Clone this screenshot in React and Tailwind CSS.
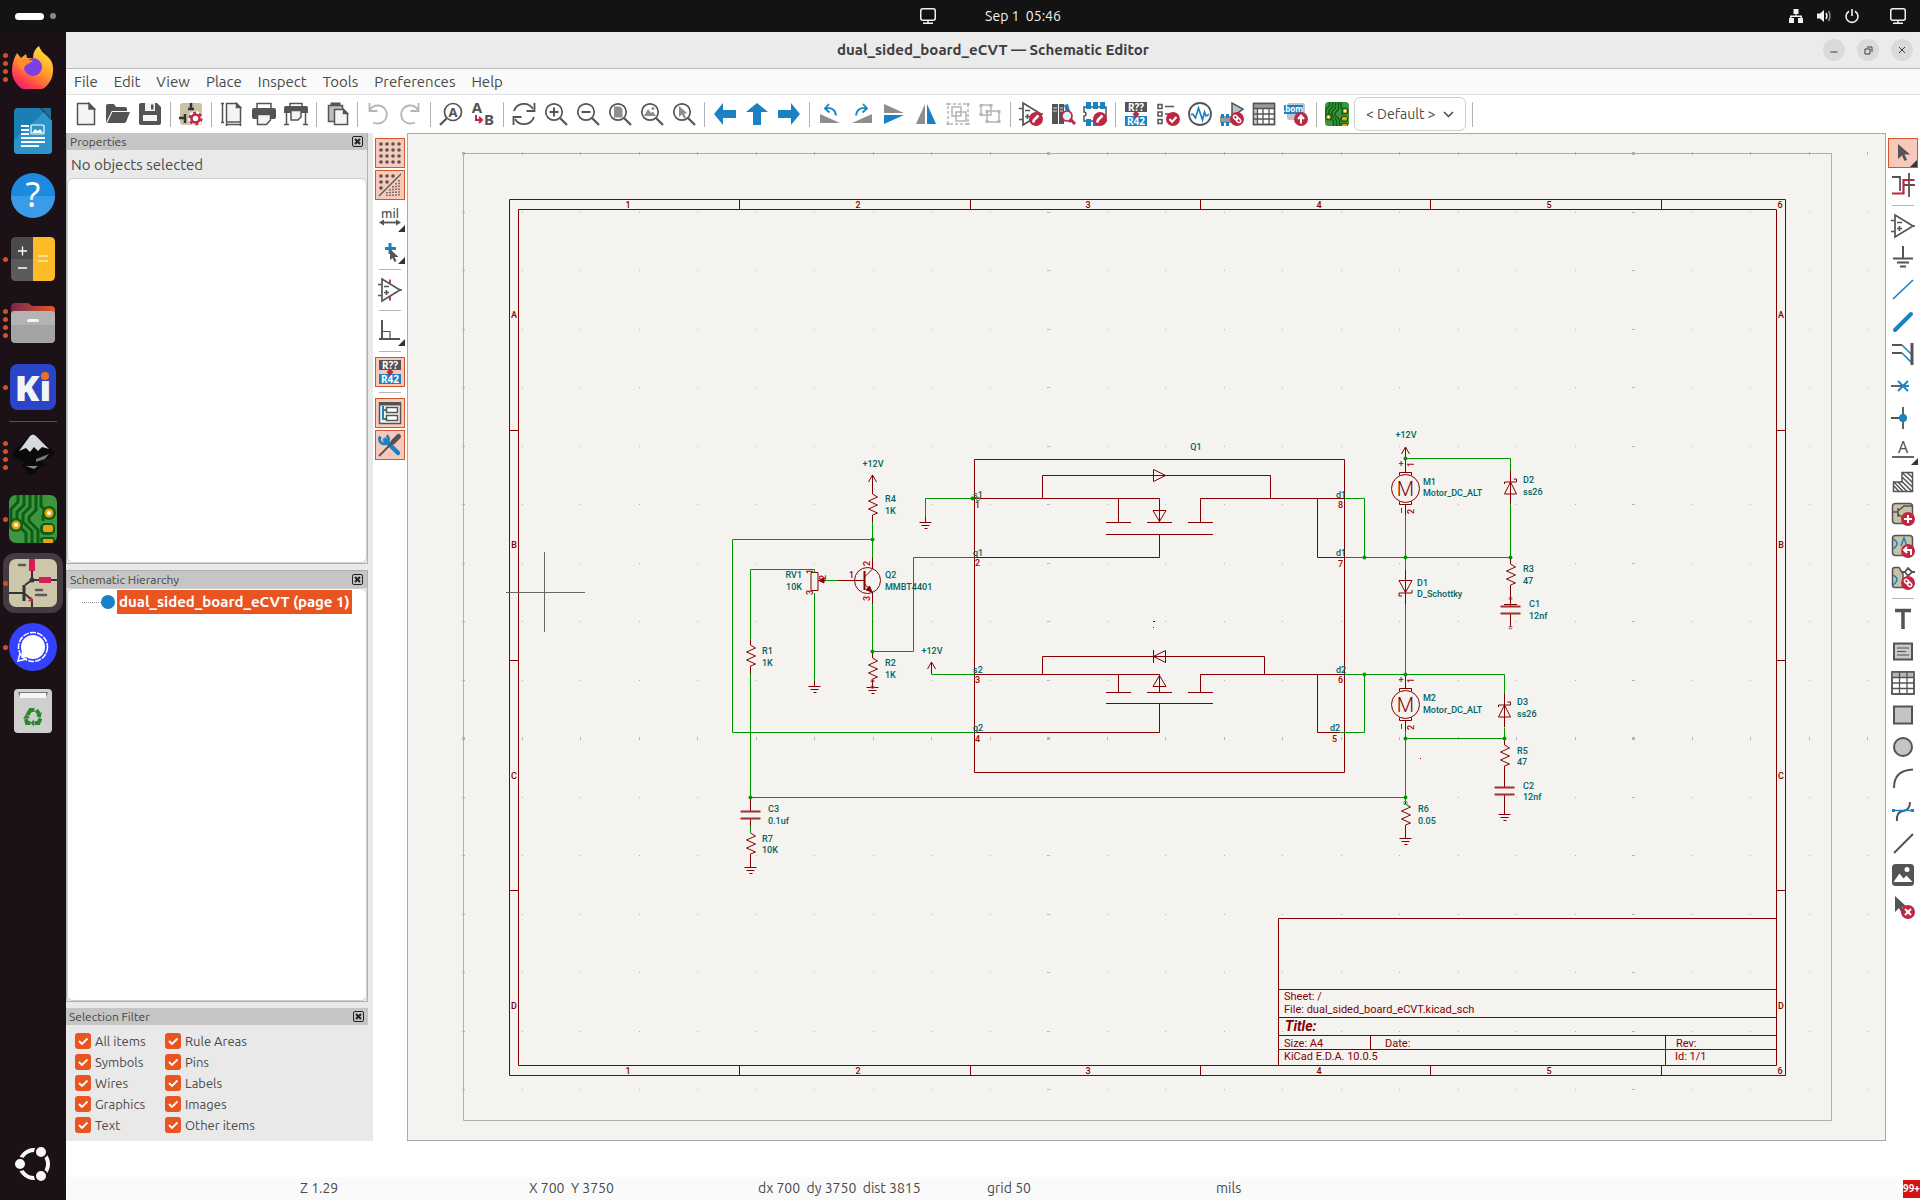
import { useState } from "react";

const INK = "#545454";
const BLUE = "#1a81c4";
const RED = "#bf2641";
const SILVER = "#b5b5b5";

/* ---------- icon helpers ---------- */

const Icon = ({ children, size = 24 }) => (
  <svg
    className="overflow-visible"
    width={size}
    height={size}
    viewBox="0 0 24 24"
    fill="none"
    stroke={INK}
    strokeWidth="1.5"
    aria-hidden="true"
  >
    {children}
  </svg>
);

const IconText = ({ x, y, size, fill = INK, weight = 700, children }) => (
  <text
    x={x}
    y={y}
    fontSize={size}
    fontWeight={weight}
    fill={fill}
    stroke="none"
    textAnchor="middle"
    fontFamily="'Noto Sans', sans-serif"
  >
    {children}
  </text>
);

const Badge = ({ x = 17, y = 17, children }) => (
  <g>
    <circle cx={x} cy={y} r="7" fill={RED} stroke="none" />
    <g stroke="#fff" strokeWidth="2" transform={`translate(${x} ${y})`}>
      {children}
    </g>
  </g>
);

const Pencil = () => <path d="M-3 3.5l1-2.5L2.5-3.5" strokeWidth="2.6" />;
const Link = () => (
  <g strokeWidth="1.5">
    <rect x="-4.5" y="-1.8" width="5" height="3.4" rx="1.7" transform="rotate(45)" />
    <rect x="-0.5" y="-1.8" width="5" height="3.4" rx="1.7" transform="rotate(45)" />
  </g>
);

const Lens = ({ children }) => (
  <Icon>
    <circle cx="10" cy="10" r="8.2" strokeWidth="1.7" />
    <path d="M16 16l7 7" strokeWidth="2.2" />
    {children}
  </Icon>
);

const OpAmp = ({ pins }) => (
  <>
    <path d="M4 1v22L22 12z" strokeWidth="1.7" />
    <path d="M0 6.5h4M0 17.5h4M21 12h3M6 8.5h5M6 14.5h5M8.5 12v5" strokeWidth="1.6" />
    {pins && <path d="M12 1.5v4.5M12 18v4.5" stroke={RED} strokeWidth="1.8" />}
  </>
);

const Annotate = () => (
  <Icon>
    <rect x="1" y="0" width="22" height="10" fill={INK} stroke="none" />
    <rect x="1" y="14" width="22" height="10" fill={BLUE} stroke="none" />
    <IconText x={12} y={9} size={10} fill="#fff">R??</IconText>
    <IconText x={12} y={23} size={10} fill="#fff">R42</IconText>
    <path d="M8.5 12L12 9l3.5 3L12 16z" fill={RED} stroke="none" />
  </Icon>
);

const PcbArt = ({ size }) => (
  <svg width={size} height={size} viewBox="0 0 48 48" aria-hidden="true">
    <rect width="48" height="48" rx="7" fill="#3f9440" />
    <g fill="none" stroke="#0b5f12" strokeWidth="3">
      <path d="M9 0v7L2 14v14M15 0v10L8 17v12l9 9v10M21 0v12l-7 7v8l9 9v12M27 0v15l-7 7v4l9 9v13M38 17L32 11V0M34 26v-5l6-4" />
    </g>
    <g fill="#0b5f12">
      <circle cx="7" cy="30" r="7" />
      <circle cx="40" cy="18" r="7" />
      <rect x="31" y="28" width="15" height="12" rx="5" />
      <rect x="31" y="42" width="15" height="6" rx="3" />
    </g>
    <g fill="#e9a013">
      <circle cx="7" cy="30" r="4.5" />
      <circle cx="40" cy="18" r="4.5" />
      <rect x="34" y="30" width="10" height="7" rx="2" />
      <rect x="34" y="44" width="10" height="4" rx="1" />
    </g>
    <circle cx="7" cy="30" r="2" fill="#fff" />
    <circle cx="40" cy="18" r="2" fill="#fff" />
  </svg>
);

const Search = ({ x, y }) => (
  <g stroke={RED}>
    <circle cx={x} cy={y} r="5" fill="#e9edf6" strokeWidth="1.7" />
    <path d={`M${x + 3.5} ${y + 3.5}l4.5 4.5`} strokeWidth="3" />
  </g>
);

const sheetBase = <rect x="1.5" y="1.5" width="20" height="20" rx="3" fill="#c9c2a6" stroke={INK} />;

const ICONS = {
  new: (
    <Icon>
      <path d="M3.5 1.5H15l5.5 5.5v15.5h-17z" fill="#f4f4f4" />
      <path d="M15 1.5V7h5.5z" fill={INK} />
    </Icon>
  ),
  open: (
    <Icon>
      <path d="M0 21V4q0-2 2-2h6l2 3h9q2 0 2 2v2H6z" fill={INK} stroke="none" />
      <path d="M6 10h18l-4 10q-.5 1-1.5 1H1z" fill={INK} stroke="none" />
      <path d="M1 20L6 9.5h16" stroke="#fff" strokeWidth="1" />
    </Icon>
  ),
  save: (
    <Icon>
      <path d="M1 3q0-2 2-2h16l4 4v16q0 2-2 2H3q-2 0-2-2z" fill={INK} stroke="none" />
      <path d="M7 1h10v8H7zM5 13h14v6H5z" fill="#f4f4f4" stroke="none" />
      <path d="M13 2.5h2.5v5H13z" fill={INK} stroke="none" />
    </Icon>
  ),
  setup: (
    <Icon>
      <rect x="1" y="1" width="22" height="22" rx="3" fill="#c9c2a6" stroke="none" />
      <path d="M12 1v7M0 16h7M6 12v9M9 7h6" stroke="#333" strokeWidth="2.5" />
      <circle cx="16.5" cy="16.5" r="7.5" fill="#fff" stroke="none" />
      <circle cx="16.5" cy="16.5" r="4" stroke={RED} strokeWidth="2.5" />
      <circle cx="16.5" cy="16.5" r="6" stroke={RED} strokeWidth="2.2" strokeDasharray="3 3.28" />
    </Icon>
  ),
  page: (
    <Icon>
      <path d="M6.5 1.5h10l4 4v14.5h-14z" fill="#f4f4f4" />
      <path d="M16.5 1.5v4h4z" fill={INK} />
      <path d="M2.5 1v20M1 1.5h3M1 20.5h3M6 22.5h15M6.5 21v3M20.5 21v3" />
    </Icon>
  ),
  print: (
    <Icon>
      <path d="M5 7V1.5h14V7" />
      <path d="M0 8q0-2 2-2h20q2 0 2 2v7q0 2-2 2H2q-2 0-2-2z" fill={INK} stroke="none" />
      <path d="M5.5 12.5h13V18l-4 4.5h-9z" fill="#f4f4f4" />
    </Icon>
  ),
  plot: (
    <Icon>
      <path d="M6 4V1.5h12V4" />
      <path d="M0 6q0-2 2-2h20q2 0 2 2v5H0z" fill={INK} stroke="none" />
      <path d="M7 8.5h10V15l-3 3H7z" fill="#f4f4f4" />
      <path d="M2.5 10v13M21.5 10v13M0 22.5h5M19 22.5h5" />
    </Icon>
  ),
  paste: (
    <Icon>
      <path d="M3.5 3.5h14v16h-14z" fill="#bdbdbd" />
      <path d="M7 3.5V2h7v1.5" strokeWidth="3" />
      <path d="M9.5 7.5h9l4 4v11h-13z" fill="#f4f4f4" />
      <path d="M18.5 7.5v4h4z" fill={INK} />
    </Icon>
  ),
  undo: (
    <Icon>
      <path d="M4 8a9 9 0 118 13.5q-3 0-5-1M3.5 1v8h8" stroke={SILVER} strokeWidth="1.8" />
    </Icon>
  ),
  redo: (
    <Icon>
      <path d="M20 8a9 9 0 10-8 13.5q3 0 5-1M20.5 1v8h-8" stroke={SILVER} strokeWidth="1.8" />
    </Icon>
  ),
  find: (
    <Icon>
      <circle cx="14" cy="10" r="8.5" strokeWidth="1.7" />
      <path d="M8 16l-7 7" strokeWidth="2.2" />
      <IconText x={14} y={15} size={13}>A</IconText>
    </Icon>
  ),
  replace: (
    <Icon>
      <IconText x={6} y={11} size={15}>A</IconText>
      <IconText x={18} y={23} size={15}>B</IconText>
      <path d="M5 13v5h5M8 15l3 3-3 3" stroke={RED} strokeWidth="2" />
    </Icon>
  ),
  refresh: (
    <Icon>
      <path d="M2 9A10.5 10.5 0 0121 7M22 15a10.5 10.5 0 01-19 2" strokeWidth="1.8" />
      <path d="M22.5 1v8h-8M1.5 23v-8h8" strokeWidth="1.8" />
    </Icon>
  ),
  zoomIn: <Lens><path d="M5.5 10h9M10 5.5v9" strokeWidth="2" /></Lens>,
  zoomOut: <Lens><path d="M5.5 10h9" strokeWidth="2" /></Lens>,
  zoomPage: <Lens><path d="M6 4.5h6l2.5 2.5v8.5H6z" fill="#8e8e8e" stroke="none" /></Lens>,
  zoomObjects: (
    <Lens>
      <path d="M4 14l4-7 3 4 2-1.5 3 4.5z" fill="#8e8e8e" stroke="none" />
      <circle cx="13" cy="6.5" r="1.5" fill="#8e8e8e" stroke="none" />
    </Lens>
  ),
  zoomSelection: <Lens><path d="M7 4v11l3-2.5 2 4 2-1-2-4h3.5z" fill="#8e8e8e" stroke="none" /></Lens>,
  back: <Icon><path d="M1 12l9-11v7h13v8H10v7z" fill={BLUE} stroke="none" /></Icon>,
  up: <Icon><path d="M12 1l11 9h-7v13H8V10H1z" fill={BLUE} stroke="none" /></Icon>,
  forward: <Icon><path d="M23 12L14 1v7H1v8h13v7z" fill={BLUE} stroke="none" /></Icon>,
  rotateLeft: (
    <Icon>
      <path d="M2 12v9h20z" fill="#8e8e8e" stroke="none" />
      <path d="M7 6.5q10-2 11 7M11 2L7 6.5l4.5 4" stroke={BLUE} strokeWidth="1.8" />
    </Icon>
  ),
  rotateRight: (
    <Icon>
      <path d="M22 12v9H2z" fill="#8e8e8e" stroke="none" />
      <path d="M17 6.5q-10-2-11 7M13 2l4 4.5-4.5 4" stroke={BLUE} strokeWidth="1.8" />
    </Icon>
  ),
  mirrorV: (
    <Icon>
      <path d="M2 2v9h20z" fill="#8e8e8e" stroke="none" />
      <path d="M2 22v-9h20z" fill={BLUE} stroke="none" />
    </Icon>
  ),
  mirrorH: (
    <Icon>
      <path d="M2 22h9V2z" fill="#8e8e8e" stroke="none" />
      <path d="M22 22h-9V2z" fill={BLUE} stroke="none" />
    </Icon>
  ),
  group: (
    <Icon>
      <g stroke={SILVER}>
        <path d="M2 2h20v20H2z" strokeDasharray="3 2" />
        <path d="M6 5h9v9H6zM10 10h10v9H10z" fill="#fff" />
        <path d="M2 1v2M22 1v2M2 21v2M22 21v2" strokeWidth="3" />
      </g>
    </Icon>
  ),
  ungroup: (
    <Icon>
      <g stroke={SILVER}>
        <path d="M3 3h10v10H3zM9 9h12v11H9z" fill="#fff" />
        <path d="M3 2v3M13 2v3M3 11v3M9 8v3M21 8v3M9 18v3M21 18v3" strokeWidth="3" />
      </g>
    </Icon>
  ),
  symbolEditor: <Icon><OpAmp /><Badge><Pencil /></Badge></Icon>,
  libraries: (
    <Icon>
      <path d="M1 2h6v20H1zM8 2h5v20H8z" fill={INK} stroke="none" />
      <path d="M2 6h4M2 9h4M9 6h3M9 9h3" stroke="#ddd" strokeWidth="1" />
      <path d="M13 3l4-1 5 17-4 2z" fill={BLUE} stroke="none" />
      <Search x={16} y={14} />
    </Icon>
  ),
  footprintEditor: (
    <Icon>
      <path d="M1 5h22v14H1v-5a2 2 0 000-4z" fill="#fff" />
      <path d="M3 0h5v7H3zM10 0h5v7h-5zM17 0h5v7h-5zM3 17h5v7H3zM10 17h5v7h-5z" fill={BLUE} stroke="none" />
      <Badge><Pencil /></Badge>
    </Icon>
  ),
  annotate: <Annotate />,
  erc: (
    <Icon>
      <path d="M2 2.5h4v4H2zM2 10h4v4H2zM2 17.5h4v4H2zM9 4.5h9M9 12h5" />
      <Badge><path d="M-3.5 0l2.5 3 4.5-5" /></Badge>
    </Icon>
  ),
  simulator: (
    <Icon>
      <circle cx="12" cy="12" r="11" fill="#fff" strokeWidth="1.8" />
      <path d="M3 13q1.5-2 2.5 0t2 3L10.5 6l4 12 2-8 1.5 4q1 0 3-2" stroke={BLUE} strokeWidth="1.7" />
    </Icon>
  ),
  assign: (
    <Icon>
      <path d="M12 1v14l11-8z" fill="#b5c3cc" stroke={INK} />
      <path d="M0 14h11v7H0z" fill="#999" stroke="none" />
      <path d="M1 12h3v4H1zM6 12h3v4H6zM1 20h3v4H1zM6 20h3v4H6z" fill={BLUE} stroke="none" />
      <Badge><Link /></Badge>
    </Icon>
  ),
  fields: (
    <Icon>
      <path d="M1.5 1.5h21v21h-21z" fill="#fff" />
      <path d="M1 1h22v5H1z" fill="#999" stroke="none" />
      <path d="M1 6h4v17H1z" fill="#ccc" stroke="none" />
      <path d="M1.5 1.5h21v21h-21zM1 6.5h22M1 12h22M1 17h22M5.5 6v16M11 6v16M17 6v16" strokeWidth="1.3" />
    </Icon>
  ),
  bom: (
    <Icon>
      <rect x="3" y="1" width="18" height="17" rx="2" fill="#c4c4c4" stroke="none" />
      <rect x="0" y="3" width="19" height="9" fill={BLUE} stroke="none" />
      <IconText x={9} y={10} size={8} fill="#fff">.bom</IconText>
      <Badge><path d="M0 4.5v-8M-3 0l3-3.5L3 0" /></Badge>
    </Icon>
  ),
  pcb: <PcbArt size={24} />,
  grid: (
    <Icon>
      {[3, 9, 15, 21].map((y) => (
        <path key={y} d={`M3 ${y}h.01M9 ${y}h.01M15 ${y}h.01M21 ${y}h.01`} strokeWidth="3.6" strokeLinecap="round" />
      ))}
    </Icon>
  ),
  gridOverride: (
    <Icon>
      <path d="M3 3h.01M9 3h.01M15 3h.01M3 9h.01M9 9h.01M3 15h.01" strokeWidth="3.6" strokeLinecap="round" />
      <path d="M1 23L23 1" strokeWidth="1.2" />
      <g strokeDasharray="1.5 1.3" strokeWidth="1.5">
        <path d="M21 7v16M18 10v13M15 13v10M12 16v7M9 19v4" />
      </g>
    </Icon>
  ),
  mil: (
    <Icon>
      <IconText x={12} y={13} size={12} weight={500}>mil</IconText>
      <path d="M3 17.5h18" strokeWidth="1.8" />
      <path d="M1 17.5l5-3v6zM23 17.5l-5-3v6z" fill={INK} stroke="none" />
    </Icon>
  ),
  cursor: (
    <Icon>
      <path d="M12 6v11M7 11.5h11" stroke={BLUE} strokeWidth="3" />
      <path d="M12 12v11l2.5-2 2 4 2-1-2-4h4z" fill={INK} stroke="none" />
    </Icon>
  ),
  hiddenPins: <Icon><OpAmp pins /></Icon>,
  angle: <Icon><path d="M4 1v20M1 20h21" strokeWidth="2" /><path d="M4 12.5h8V20" strokeWidth="1.2" /></Icon>,
  hierarchy: (
    <Icon>
      <path d="M1.5 2h21v20.5h-21z" fill="#f4f4f4" />
      <path d="M1 1h22v3.5H1z" fill={INK} stroke="none" />
      <path d="M5 5v13h3M5 9h3" stroke={BLUE} strokeWidth="2" />
      <path d="M8.5 6.5h11v5h-11zM8.5 14.5h11v5h-11z" fill="#fff" />
    </Icon>
  ),
  tools: (
    <Icon>
      <path d="M7 7l13 13" stroke={BLUE} strokeWidth="4.5" strokeLinecap="round" />
      <path d="M2.5 3.5a4.5 4.5 0 106-1" stroke={BLUE} strokeWidth="3" />
      <path d="M1 23L14 10" strokeWidth="1.8" />
      <path d="M15 9l5.5-5.5" strokeWidth="5" strokeLinecap="round" />
    </Icon>
  ),
  select: <Icon><path d="M7 3v15l4-3.5 2.5 5.5 2.5-1.2-2.5-5.3H19z" fill={INK} stroke="none" /></Icon>,
  highlightNet: (
    <Icon>
      <path d="M1 4h8v14M18 0v24M13 12h11" strokeWidth="1.8" />
      <path d="M1 20.5h11.5V7h11" stroke={RED} strokeWidth="2.2" />
    </Icon>
  ),
  symbol: <Icon><OpAmp /></Icon>,
  power: <Icon><path d="M12 0v12M2 12.5h20M6 16.5h12M9 20.5h6" strokeWidth="2" /></Icon>,
  wire: <Icon><path d="M2 21L22 2" stroke={BLUE} strokeWidth="1.6" /></Icon>,
  bus: <Icon><path d="M4 20L20 4" stroke={BLUE} strokeWidth="4" strokeLinecap="round" /></Icon>,
  busEntry: (
    <Icon>
      <path d="M1 3h10M1 11h10" strokeWidth="1.8" />
      <path d="M11 3l10 10M11 11l10 10" stroke={BLUE} strokeWidth="1.6" />
      <path d="M21 1v22" strokeWidth="3" />
    </Icon>
  ),
  noConnect: <Icon><path d="M0 12h12" strokeWidth="1.8" /><path d="M7 7l10 10M17 7L7 17M12 12h6" stroke={BLUE} strokeWidth="1.8" /></Icon>,
  junction: <Icon><path d="M12 1v22M0 12h12" strokeWidth="1.8" /><circle cx="12" cy="12" r="4" fill={BLUE} stroke="none" /></Icon>,
  label: <Icon><IconText x={12} y={15} size={16} weight={400}>A</IconText><path d="M1 19h22" strokeWidth="1.8" /></Icon>,
  ruleArea: (
    <Icon>
      <path d="M11 2.5h10.5v19h-19V12H11z" fill="#fff" />
      <path d="M11 2.5l10.5 10M11 7l10.5 10M3 12l9 9.5M11 11.5l10 10M16 2.5l5.5 5M3 16l5 5.5M7 12l9 9.5" strokeWidth="1.5" />
    </Icon>
  ),
  sheet: (
    <Icon>
      {sheetBase}
      <path d="M2 10h5M7 6v9M7 9l6-5h8M7 12l5 4" strokeWidth="1.5" />
      <Badge><path d="M-4 0h8M0-4v8" /></Badge>
    </Icon>
  ),
  importSheet: (
    <Icon>
      {sheetBase}
      <path d="M2 5q8 4 0 10M10 12l3-8 3 8" stroke={BLUE} />
      <Badge><path d="M3 4V-1h-6M-1-4l-3 3 3 3" /></Badge>
    </Icon>
  ),
  syncSheet: (
    <Icon>
      <path d="M8 1.5H4q-2.500 0-2.500 2.500v15q0 2.500 2.500 2.500h8V8z" fill="#c9c2a6" />
      <path d="M2 9q8 4 0 10" stroke={BLUE} />
      <path d="M11 6h3l3-4 4 4h3M14 6l3 4 4-4" strokeWidth="1.8" />
      <Badge><Link /></Badge>
    </Icon>
  ),
  text: <Icon><path d="M4 3.5h16M12 3v19" strokeWidth="3.5" /></Icon>,
  textBox: <Icon><path d="M3 4.5h18v16H3z" fill="#c9c9c9" strokeWidth="2" /><path d="M6 9h12M6 12.5h9M6 16h12" strokeWidth="1.2" /></Icon>,
  table: (
    <Icon>
      <path d="M1 1h22v22H1z" fill="#fff" />
      <path d="M1 1h22v5H1z" fill="#b5b5b5" stroke="none" />
      <path d="M1 1h22v22H1zM1 6.5h22M1 12h22M1 17.5h22M8.5 1v22M16 1v22" strokeWidth="1.3" />
    </Icon>
  ),
  rect: <Icon><path d="M3 3.5h18v17H3z" fill="#c4c4c4" strokeWidth="2" /></Icon>,
  circle: <Icon><circle cx="12" cy="12" r="9" fill="#c4c4c4" strokeWidth="2" /></Icon>,
  arc: <Icon><path d="M3 21Q3 3 22 2.5" strokeWidth="2" /></Icon>,
  bezier: (
    <Icon>
      <path d="M6 22q-1-9 6-10t7-9" strokeWidth="2" />
      <path d="M2 11.5h20" stroke={BLUE} strokeWidth="1.5" />
      <path d="M1 10h3v3H1zM20 10h3v3h-3z" fill={BLUE} stroke="none" />
    </Icon>
  ),
  line: <Icon><path d="M3 22L22 3" strokeWidth="2" /></Icon>,
  image: (
    <Icon>
      <rect x="1" y="1" width="22" height="22" rx="3.5" fill={INK} stroke="none" />
      <path d="M2.5 19l6-8.5 4 5 3-3 6 6.5z" fill="#fff" stroke="none" />
      <circle cx="16" cy="6.5" r="2.5" fill="#fff" stroke="none" />
    </Icon>
  ),
  remove: (
    <Icon>
      <path d="M4 1v16l4-4 3 6 3-1.5-3-5.5h5z" fill={INK} stroke="none" />
      <Badge><path d="M-3-3l6 6M3-3l-6 6" /></Badge>
    </Icon>
  ),
};

/* "|" is a separator, "*" marks a pressed button, "+" one with a flyout */
const TOP_TOOLS =
  "new open save | setup | page print plot | paste | undo redo | find replace | refresh zoomIn zoomOut zoomPage zoomObjects zoomSelection | back up forward | rotateLeft rotateRight mirrorV mirrorH group ungroup | symbolEditor libraries footprintEditor | annotate erc simulator assign fields bom | pcb";
const LEFT_TOOLS = "grid* gridOverride* mil+ cursor+ | hiddenPins | angle+ | annotate* | hierarchy* tools*";
const RIGHT_TOOLS =
  "select*+ highlightNet | symbol power wire bus busEntry noConnect junction label+ ruleArea sheet importSheet syncSheet | text textBox table rect circle arc bezier line image remove";

const Tools = ({ list, vertical }) =>
  list.split(" ").map((entry, i) => {
    if (entry === "|") {
      return vertical ? (
        <div key={i} className="flex h-[9px] w-full items-center justify-center">
          <div className="h-px w-[22px] bg-[#b4b4b4]" />
        </div>
      ) : (
        <div key={i} className="flex h-[25px] w-[9px] justify-center">
          <div className="w-px bg-[#b4b4b4]" />
        </div>
      );
    }
    const name = entry.replace(/[*+]/g, "");
    return (
      <button
        key={i}
        aria-label={name}
        className={`relative m-px flex h-[30px] w-[30px] shrink-0 items-center justify-center ${
          entry.includes("*") ? "border border-[#d0582f] bg-[#f6c9bb]" : ""
        }`}
      >
        {ICONS[name]}
        {entry.includes("+") && (
          <svg className="absolute right-0 bottom-0" width="7" height="7" viewBox="0 0 7 7">
            <path d="M7 0v7H0z" fill="#333" />
          </svg>
        )}
      </button>
    );
  });

/* ---------- shell top bar and dock ---------- */

const Screen = () => (
  <svg width="18" height="18" viewBox="0 0 18 18" fill="none" stroke="#f2f2f2" strokeWidth="1.5">
    <rect x="1.75" y="1.75" width="14.5" height="11.5" rx="2" />
    <path d="M9 13v2.500M4 16.250h10" />
  </svg>
);

const TopBar = () => (
  <header className="grid h-8 shrink-0 grid-cols-3 items-center bg-[#131313] text-[#f2f2f2]">
    <div className="flex items-center gap-[6px] pl-[15px]">
      <span className="h-[7px] w-[29px] rounded-full bg-white" />
      <span className="h-[6px] w-[6px] rounded-full bg-[#8a8a8a]" />
    </div>
    <div className="flex items-center justify-center gap-12 pl-[60px]">
      <Screen />
      <time className="text-[14px] leading-[18px]">Sep 1&nbsp; 05:46</time>
    </div>
    <div className="flex items-center justify-end gap-3 pr-[13px]">
      <svg width="16" height="16" viewBox="0 0 16 16" fill="#f2f2f2">
        <path d="M5.5 1h5v5h-2v1.5H14V10h1v5h-5v-5h2.5V9h-9v1H6v5H1v-5h1V7.5h5.5V6h-2z" />
      </svg>
      <svg width="16" height="16" viewBox="0 0 16 16" fill="#f2f2f2">
        <path d="M1 5.5h3L8 2v12l-4-3.5H1z" />
        <path d="M10 5q2 3 0 6" fill="none" stroke="#f2f2f2" strokeWidth="1.5" />
        <path d="M12.5 3q3 5 0 10" fill="none" stroke="#8a8a8a" strokeWidth="1.5" />
      </svg>
      <svg width="16" height="16" viewBox="0 0 16 16" fill="none" stroke="#f2f2f2" strokeWidth="1.6">
        <path d="M8 1v7M5 3.2a6 6 0 106 0" />
      </svg>
      <span className="pl-[17px]">
        <Screen />
      </span>
    </div>
  </header>
);

const DOCK = [
  {
    name: "Firefox",
    dots: 4,
    art: (
      <svg width="44" height="44" viewBox="0 0 44 44">
        <defs>
          <linearGradient id="fox" x1="0.8" y1="0" x2="0.2" y2="1">
            <stop offset="0" stopColor="#ffe93b" />
            <stop offset="0.45" stopColor="#ff9a2b" />
            <stop offset="0.8" stopColor="#ff3b4f" />
            <stop offset="1" stopColor="#e6188c" />
          </linearGradient>
        </defs>
        <path d="M6 8l4 5 5-4 1 4h6q0-8 6-12 2 6 8 10 7 6 6 15a20 20 0 01-41 0Q1 16 6 8z" fill="url(#fox)" />
        <circle cx="22" cy="22" r="9" fill="#7b3fe4" />
        <path d="M6 16q8-4 16 0l-5 3q-5 2-4 7-6-3-7-10z" fill="#ff8a2b" />
      </svg>
    ),
  },
  {
    name: "LibreOffice Writer",
    dots: 0,
    art: (
      <svg width="38" height="46" viewBox="0 0 38 46">
        <path d="M0 4q0-4 4-4h22l12 13v29q0 4-4 4H4q-4 0-4-4z" fill="#1b7fb5" />
        <path d="M0 32L30 4l8 9v29q0 4-4 4H4q-4 0-4-4z" fill="#2a94cb" />
        <path d="M27 0h10v11z" fill="#1f6f9c" />
        <path d="M7 18h8M7 22h8M7 26h8M7 30h24M7 34h24M7 38h18" stroke="#fff" strokeWidth="2" />
        <rect x="17" y="17" width="13" height="9" rx="1" fill="none" stroke="#fff" strokeWidth="1.2" />
        <path d="M18 25l3-4 3 2 2-2 3 4z" fill="#fff" />
      </svg>
    ),
  },
  {
    name: "Help",
    dots: 0,
    art: (
      <svg className="overflow-visible" width="44" height="44" viewBox="0 0 44 44">
        <circle cx="22" cy="22" r="22" fill="#1e8adf" />
        <path d="M0 23h44a22 22 0 01-44 0z" fill="#3a9ce8" />
        <text x="22" y="34" fontSize="34" fill="#fff" textAnchor="middle" fontFamily="'Noto Sans', sans-serif">?</text>
      </svg>
    ),
  },
  {
    name: "Calculator",
    dots: 1,
    art: (
      <svg width="44" height="44" viewBox="0 0 44 44">
        <path d="M5 0h17v44H5q-5 0-5-5V5q0-5 5-5z" fill="#4a4a4a" />
        <path d="M0 22h22v22H5q-5 0-5-5z" fill="#5b5b5b" />
        <path d="M22 0h17q5 0 5 5v34q0 5-5 5H22z" fill="#fdbb27" />
        <path d="M7 14h9M11.5 9.5v9M7 31h9" stroke="#fff" strokeWidth="1.3" />
        <path d="M27 19h10M27 24h10" stroke="#fff" strokeWidth="1.2" />
      </svg>
    ),
  },
  {
    name: "Files",
    dots: 4,
    art: (
      <svg width="44" height="40" viewBox="0 0 44 40">
        <defs>
          <linearGradient id="folder">
            <stop offset="0" stopColor="#77264a" />
            <stop offset="1" stopColor="#e6582b" />
          </linearGradient>
        </defs>
        <path d="M0 4q0-4 4-4h13l4 3h19q4 0 4 4v20H0z" fill="url(#folder)" />
        <rect y="8" width="44" height="32" rx="4" fill="#a3a3a3" />
        <path d="M0 12q0-4 4-4h36q4 0 4 4v10H0z" fill="#b3b3b3" />
        <rect x="16" y="16" width="12" height="3" rx="1.5" fill="#f4f4f4" />
      </svg>
    ),
  },
  {
    name: "KiCad",
    dots: 1,
    art: (
      <svg className="overflow-visible" width="46" height="46" viewBox="0 0 46 46">
        <rect width="46" height="46" rx="8" fill="#2a45c8" />
        <text x="23" y="37" fontSize="36" fontWeight="800" fill="#f4f4f4" textAnchor="middle" fontFamily="'Open Sans', sans-serif">Ki</text>
        <rect x="31" y="6" width="10" height="11" fill="#2a45c8" />
        <circle cx="35" cy="12" r="4" fill="#f5701d" />
      </svg>
    ),
  },
  null,
  {
    name: "Inkscape",
    dots: 4,
    art: (
      <svg width="46" height="46" viewBox="0 0 46 46">
        <path d="M20 3q3-3 6 0l17 16q3 3-1 5-6 4-11 5l4 4q-5 3-8 5-2 6-7 5-4-1-3-5-7-2-5-5l4-3q-8-1-13-6-2-2 0-4z" fill="#0a0a0a" />
        <path d="M20 4q3-3 6 0l13 13-7-2-4 4-4-4-4 5-4-4-7 3z" fill="#d5d8dc" />
        <path d="M26 27l13-5-4 5-9 3z" fill="#777" />
        <path d="M16 34h12l-4 3z" fill="#888" />
      </svg>
    ),
  },
  { name: "PCB Editor", dots: 1, art: <PcbArt size={48} /> },
  {
    name: "Schematic Editor",
    dots: 1,
    active: true,
    art: (
      <svg width="48" height="48" viewBox="0 0 48 48">
        <rect width="48" height="48" rx="7" fill="#cdc6a9" />
        <g stroke="#333" strokeWidth="2" fill="none">
          <path d="M23 0v21l-7 5M0 34h15M23 21h25M16 35l7 6v7" />
          <path d="M15 26v16" strokeWidth="3" />
          <path d="M10 6h6M27 31h6M27 36h10" strokeWidth="2.5" strokeLinecap="round" stroke="#5a5a5a" />
        </g>
        <circle cx="23" cy="21" r="2.5" fill="#333" />
        <path d="M20 0h6v12h-6zM30 18h12v6H30zM24 43l-5-1 4-4z" fill="#d81b5c" />
      </svg>
    ),
  },
  {
    name: "Signal",
    dots: 1,
    art: (
      <svg width="48" height="48" viewBox="0 0 48 48">
        <circle cx="24" cy="24" r="24" fill="#3442ff" />
        <circle cx="24" cy="24" r="14.5" fill="none" stroke="#fff" strokeWidth="1.5" strokeDasharray="6 1.2" />
        <path d="M11 30l-2 8 9-2" fill="none" stroke="#fff" strokeWidth="1.5" />
        <circle cx="24" cy="24" r="12" fill="#fff" />
        <path d="M13 27l-1 8 8-1z" fill="#fff" />
      </svg>
    ),
  },
  {
    name: "Trash",
    dots: 0,
    art: (
      <svg width="38" height="44" viewBox="0 0 38 44">
        <rect width="38" height="44" rx="4" fill="#cfcfcf" />
        <path d="M4 3h30l-2 5H6z" fill="#777" />
        <path d="M6 4h26v5H6z" fill="#f6f6f6" />
        <g fill="none" stroke="#2a8a2a" strokeWidth="4">
          <path d="M13.5 26l3-5h4M22.5 21l3 5M26.5 29.5l-2 4.5h-4M16.5 34H13l-1-4" />
        </g>
        <path d="M28 23l-1.5 6-4.5-2zM20 30.5v7l-3.5-3.5zM9 30l3-5 4 4z" fill="#2a8a2a" />
      </svg>
    ),
  },
];

const Dock = () => (
  <nav className="flex w-[66px] shrink-0 flex-col bg-[#1d1118] pt-[3px]">
    {DOCK.map((app, i) =>
      app === null ? (
        <div key={i} className="flex h-1 items-center justify-center">
          <div className="h-px w-12 bg-[#5a5056]" />
        </div>
      ) : (
        <div key={app.name} className="relative flex h-16 items-center justify-center">
          <div className="absolute left-[3px] flex flex-col gap-[3px]">
            {Array.from({ length: app.dots }, (_, n) => (
              <span key={n} className="h-[5px] w-[5px] rounded-full bg-[#d4501f]" />
            ))}
          </div>
          <button
            aria-label={app.name}
            className={`flex h-[60px] w-[60px] items-center justify-center rounded-xl ${app.active ? "bg-[#453a41]" : ""}`}
          >
            {app.art}
          </button>
        </div>
      ),
    )}
    <button aria-label="Show apps" className="mt-auto mb-1 flex h-16 items-center justify-center">
      <svg width="38" height="38" viewBox="0 0 38 38" fill="none" stroke="#f7f7f7" strokeWidth="4">
        <circle cx="20" cy="19" r="14" />
        <g fill="#f7f7f7" stroke="#1d1118" strokeWidth="2">
          <circle cx="6" cy="19" r="6" />
          <circle cx="27" cy="7" r="6" />
          <circle cx="27" cy="31" r="6" />
        </g>
      </svg>
    </button>
  </nav>
);

/* ---------- left panels ---------- */

const PanelHeader = ({ title }) => (
  <div className="flex h-[17px] shrink-0 items-center justify-between bg-[#c5c5c5] pr-1 pl-[3px]">
    <h2 className="text-[12px] leading-[14px] text-[#444]">{title}</h2>
    <button aria-label={`Close ${title}`}>
      <svg width="11" height="11" viewBox="0 0 11 11" fill="none" stroke="#222">
        <rect x="0.5" y="0.5" width="10" height="10" rx="1.5" />
        <path d="M3 3l5 5M8 3L3 8" strokeWidth="2" />
      </svg>
    </button>
  </div>
);

const FILTERS = [
  "All items", "Rule Areas",
  "Symbols", "Pins",
  "Wires", "Labels",
  "Graphics", "Images",
  "Text", "Other items",
];

const SelectionFilter = () => {
  const [off, setOff] = useState({});
  return (
    <div className="grid grid-cols-[90px_1fr] gap-y-[5px] py-2 pl-[9px]">
      {FILTERS.map((name) => (
        <label key={name} className="flex h-4 items-center gap-1 text-[13px] leading-4">
          <span className="relative flex h-4 w-4">
            <input
              type="checkbox"
              checked={!off[name]}
              onChange={() => setOff({ ...off, [name]: !off[name] })}
              className="peer h-4 w-4 appearance-none rounded-[3px] bg-white checked:bg-[#e95420]"
            />
            <svg
              className="pointer-events-none absolute inset-0 opacity-0 peer-checked:opacity-100"
              width="16"
              height="16"
              viewBox="0 0 16 16"
              fill="none"
              stroke="#fff"
              strokeWidth="1.8"
            >
              <path d="M4 8l3 3 5.5-5.5" />
            </svg>
          </span>
          {name}
        </label>
      ))}
    </div>
  );
};

const LeftPanels = () => (
  <aside className="flex w-[307px] shrink-0 flex-col bg-[#e9e9e9] pr-[5px]">
    <section className="flex min-h-0 flex-[432_1_0] flex-col border border-t-0 border-[#b0b0b0]">
      <PanelHeader title="Properties" />
      <p className="h-7 shrink-0 pt-px pl-1 text-[15px] leading-7">No objects selected</p>
      <div className="min-h-0 flex-1 rounded-md border border-[#cfcfcf] bg-white" />
    </section>
    <section className="mt-[6px] flex min-h-0 flex-[432_1_0] flex-col border border-[#b0b0b0]">
      <PanelHeader title="Schematic Hierarchy" />
      <div className="min-h-0 flex-1 rounded-md border border-[#cfcfcf] bg-white pt-px pl-[14px]">
        <div className="flex items-center">
          <span className="w-[19px] border-t border-dotted border-[#999]" />
          <span className="mr-[2px] h-[14px] w-[14px] rounded-full bg-[#1a81c4]" />
          <span className="bg-[#e95420] px-[2px] text-[15px] leading-6 font-semibold text-white">
            dual_sided_board_eCVT (page 1)
          </span>
        </div>
      </div>
    </section>
    <section className="mt-[6px] shrink-0">
      <PanelHeader title="Selection Filter" />
      <SelectionFilter />
    </section>
  </aside>
);

/* ---------- schematic drawing ---------- */

const MAROON = "#840000";
const WIRE = "#009600";
const PIN = "#a90000";
const FIELD = "#006464";

const zigzag = (x, y) => `M${x} ${y}l5 3-9 4 9 4-9 4 9 4-5 2`;
const ground = (x, y) => `M${x - 6} ${y}h12M${x - 4} ${y + 3}h8M${x - 1} ${y + 6}h3`;
const arrow = (x, y, h) => `M${x} ${y}v${h}M${x - 4} ${y + 7}l4-7 4 7`;
const motor = (x, y) =>
  `M${x} ${y - 30}v14M${x - 6} ${y - 13}v-3h12v3M${x - 6} ${y + 13}v3h12v-3M${x} ${y + 16}v11`;
const schottkyUp = (x, y) =>
  `M${x} ${y}v34M${x} ${y + 12}l-6 12h12zM${x - 6} ${y + 14}v-2h12v-3h-3`;

const DARK = [
  // input divider and driver transistor
  arrow(872.5, 475, 19), zigzag(872.5, 494), "M872.5 515v7",
  "M872.5 558v11L864.5 577M838 580.5h26M864.5 584l8 8v12",
  "M811 572.5h7v18h-7zM818 580.5h8",
  "M872.5 651v7", zigzag(872.5, 658), "M872.5 679v8", ground(872.5, 687.5),
  "M750.5 640v5", zigzag(750.5, 645), "M750.5 666v8", ground(814.5, 686.5), "M814.5 681v5",
  "M750.5 800v11M750.5 819v7", zigzag(750.5, 833), "M750.5 854v13", ground(750.5, 867.5),
  "M925.5 517v5", ground(925.5, 522.5), arrow(931.5, 662, 12),
  // dual mosfet
  "M974.5 459.5h370v313h-370z",
  "M974.5 498.5h185v24M1118.5 498.5v24M1200.5 522.5v-24h144M1106 522.5h25M1147 522.5h25M1188 522.5h25",
  "M1106 534.5h107M1159.5 534.5v23h-185M1153 510.5h13l-6.5 11z",
  "M1042.5 498.5v-23h228v23M1153.5 469.5v12l12-6zM1317.5 498.5v59h27",
  "M974.5 674.5h185v18M1118.5 674.5v18M1200.5 692.5v-18h144M1106 692.5h25M1147 692.5h25M1188 692.5h25",
  "M1106 703.5h107M1159.5 703.5v29h-185M1153 686.5h13l-6.5-11z",
  "M1042.5 674.5v-18h222v18M1165.5 650.5v12l-12-6zM1153.5 650v13M1317.5 674.5v58h23",
  // load side
  arrow(1405.5, 447, 11), motor(1405.5, 488.5), motor(1405.5, 704.5),
  schottkyUp(1510.5, 470), schottkyUp(1504.5, 693),
  "M1405.5 570v34M1399 580.5h13l-6.5 12zM1412 590v3h-13v3h3",
  "M1510.5 557v7", zigzag(1510.5, 564), "M1510.5 585v21M1510.5 614v13M1504 604.5h13",
  "M1504.5 738v7", zigzag(1504.5, 745), "M1504.5 766v21M1504.5 795v19", ground(1504.5, 814.5),
  "M1405.5 800v4", zigzag(1405.5, 804), "M1405.5 825v13", ground(1405.5, 838.5),
  "M1153 621.5h2M1153 627.5h1M1420 758.5h1",
];

const WIRES = [
  "M872.5 522v36M872.5 539.5h-140v193h242M872.5 604v47M872.5 651.5h41v-94h61",
  "M750.5 640v-70.5h64v3M814.5 593v88M826 580.5h12M750.5 674v126M750.5 826v7",
  "M750.5 797.5h655M925.5 517v-18.5h49M931.5 674.5h43",
  "M1344.5 498.5h20v59M1344.5 557.5h166M1405.5 515v55M1405.5 604v70",
  "M1405.5 458.5h105v12M1510.5 504v53M1344.5 674.5h160v19M1364.5 674.5v58h-24",
  "M1405.5 731v70M1405.5 738.5h99v-11",
];

const JUNCTIONS = [
  [872.5, 539.5], [872.5, 651.5], [750.5, 797.5], [972.5, 498.5], [1405.5, 458.5],
  [1364.5, 557.5], [1405.5, 557.5], [1510.5, 557.5], [1364.5, 674.5], [1405.5, 674.5],
  [1405.5, 738.5], [1504.5, 738.5], [1405.5, 797.5],
];

const CAPS = [[750.5, 811.5], [1510.5, 606.5], [1504.5, 787.5]];

// x, baseline, text, anchor
const FIELDS = [
  [873, 467, "+12V", "middle"], [885, 502, "R4"], [885, 514, "1K"],
  [885, 578, "Q2"], [885, 590, "MMBT4401"], [802, 578, "RV1", "end"], [802, 590, "10K", "end"],
  [762, 654, "R1"], [762, 666, "1K"], [885, 666, "R2"], [885, 678, "1K"],
  [932, 654, "+12V", "middle"], [768, 812, "C3"], [768, 824, "0.1uf"],
  [762, 842, "R7"], [762, 853, "10K"], [1196, 450, "Q1", "middle"],
  [973, 498, "s1"], [973, 556, "g1"], [973, 673, "s2"], [973, 731, "g2"],
  [1336, 498, "d1"], [1336, 556, "d1"], [1336, 673, "d2"], [1330, 731, "d2"],
  [1406, 438, "+12V", "middle"], [1423, 485, "M1"], [1423, 496, "Motor_DC_ALT"],
  [1423, 701, "M2"], [1423, 713, "Motor_DC_ALT"], [1523, 483, "D2"], [1523, 495, "ss26"],
  [1523, 572, "R3"], [1523, 584, "47"], [1529, 607, "C1"], [1529, 619, "12nf"],
  [1417, 586, "D1"], [1417, 597, "D_Schottky"], [1517, 705, "D3"], [1517, 717, "ss26"],
  [1517, 754, "R5"], [1517, 765, "47"], [1523, 789, "C2"], [1523, 800, "12nf"],
  [1418, 812, "R6"], [1418, 824, "0.05"],
  [1401, 467, "+", "middle"], [1401, 683, "+", "middle"],
];

const PINS = [
  [975, 508, "1"], [975, 566, "2"], [975, 683, "3"], [975, 742, "4"],
  [1338, 508, "8"], [1338, 567, "7"], [1338, 683, "6"], [1332, 742, "5"], [849, 578, "1"],
];

// rotated pin numbers
const SIDE_PINS = [
  [870, 566, "2"], [870, 601, "3"], [1414, 467, "1"], [1414, 514, "2"],
  [1414, 683, "1"], [1414, 730, "2"], [813, 574, "1"], [813, 595, "3"], [826, 580, "2"],
];

const FRAME_TICKS = [739.5, 970.5, 1200.5, 1430.5, 1661.5]
  .map((x) => `M${x} 199v10M${x} 1065v10`)
  .concat([430.5, 660.5, 890.5].map((y) => `M509 ${y}h9M1777 ${y}h9`));

const FRAME_TEXT = [
  ...[628, 858, 1088, 1319, 1549, 1780].flatMap((x, i) => [[x, 208, i + 1], [x, 1074, i + 1]]),
  ...[315, 545, 776, 1006].flatMap((y, i) => [[514, y + 3, "ABCD"[i]], [1781, y + 3, "ABCD"[i]]]),
];

const GRID = 58.5;

const Schematic = () => (
  <svg
    className="block h-full w-full"
    viewBox="408 134 1477 1006"
    preserveAspectRatio="xMinYMin meet"
    fill="none"
    fontFamily="Roboto, sans-serif"
    role="img"
    aria-label="Schematic"
  >
    <g fill="#b4b4b4" shapeRendering="crispEdges">
      {Array.from({ length: 25 * 17 }, (_, i) => {
        const col = i % 25;
        const row = Math.floor(i / 25);
        const w = col % 10 === 0 ? 3 : 1;
        const h = row % 10 === 0 ? 3 : 1;
        return (
          <rect
            key={i}
            x={Math.round(463 + col * GRID) - (w - 1) / 2}
            y={Math.round(153 + row * GRID) - (h - 1) / 2}
            width={w}
            height={h}
          />
        );
      })}
    </g>
    <path d="M463.5 153.5h1368v967h-1368z" stroke="#b0b0ae" />

    {/* drawing sheet frame and title block */}
    <g stroke={MAROON}>
      <path d="M509.5 199.5h1276v876h-1276zM518.5 209.5h1258v856h-1258z" />
      <path d={FRAME_TICKS.join("")} />
      <path d="M1278.5 1065v-146.5h498M1278 989.5h498M1278 1017.5h498M1278 1035.5h498M1278 1049.5h498M1370.5 1035v14M1665.5 1035v30" />
    </g>
    <g fill={MAROON} fontSize="9" fontWeight="500" textAnchor="middle">
      {FRAME_TEXT.map(([x, y, t], i) => (
        <text key={i} x={x} y={y}>{t}</text>
      ))}
    </g>
    <g fill={MAROON} fontSize="11">
      <text x="1284" y="1000">Sheet: /</text>
      <text x="1284" y="1013">File: dual_sided_board_eCVT.kicad_sch</text>
      <text x="1285" y="1031" fontSize="14" fontWeight="700" fontStyle="italic">Title:</text>
      <text x="1284" y="1047">Size: A4</text>
      <text x="1385" y="1047">Date:</text>
      <text x="1676" y="1047">Rev:</text>
      <text x="1284" y="1060">KiCad E.D.A. 10.0.5</text>
      <text x="1675" y="1060">Id: 1/1</text>
    </g>

    {/* symbols */}
    <path d={DARK.join("")} stroke={MAROON} />
    <path d="M864.5 571v19" stroke={MAROON} strokeWidth="2" />
    <path d="M872 592l-6-2 3.5-4zM819 580.5l5-2.5v5z" fill={MAROON} stroke={MAROON} />
    <g stroke={MAROON}>
      <circle cx="867.5" cy="580.5" r="13" />
      <circle cx="1405.5" cy="488.5" r="14" />
      <circle cx="1405.5" cy="704.5" r="14" />
    </g>
    {CAPS.map(([x, y]) => (
      <path key={x + y} d={`M${x - 10} ${y}h20M${x - 10} ${y + 7}h20`} stroke="#a33030" strokeWidth="2" />
    ))}
    <g stroke="#b84848">
      <circle cx="872.5" cy="681" r="1.5" />
      <circle cx="872.5" cy="687" r="1.5" />
      <circle cx="1510.5" cy="598.5" r="1.5" />
      <circle cx="1510.5" cy="627.5" r="1.5" />
    </g>
    <g fill={MAROON} fontSize="20" textAnchor="middle" fontWeight="300">
      <text x="1405.5" y="496">M</text>
      <text x="1405.5" y="712">M</text>
    </g>

    {/* wires */}
    <path d={WIRES.join("")} stroke={WIRE} />
    {JUNCTIONS.map(([x, y]) => (
      <circle key={`${x}-${y}`} cx={x} cy={y} r="2" fill={WIRE} />
    ))}
    <path d="M1404 801.5h3v3h-3zM976.5 497.5h3v3h-3z" stroke="#4bb04b" />

    {/* texts */}
    <g fill={FIELD} fontSize="9" fontWeight="500">
      {FIELDS.map(([x, y, t, anchor], i) => (
        <text key={i} x={x} y={y} textAnchor={anchor}>{t}</text>
      ))}
    </g>
    <path d="M1401.5 508v5M1401.5 724v5" stroke={FIELD} />
    <g fill={PIN} fontSize="9" fontWeight="500">
      {PINS.map(([x, y, t], i) => (
        <text key={i} x={x} y={y}>{t}</text>
      ))}
      {SIDE_PINS.map(([x, y, t], i) => (
        <text key={i} transform={`translate(${x} ${y}) rotate(-90)`}>{t}</text>
      ))}
    </g>

    {/* crosshair */}
    <path d="M544.5 552v80M506 592.5h79" stroke="#666" />
  </svg>
);

/* ---------- window ---------- */

const MENUS = ["File", "Edit", "View", "Place", "Inspect", "Tools", "Preferences", "Help"];

const WINDOW_BUTTONS = [
  ["Minimize", "M6 11.5h7"],
  ["Restore", "M6.5 8.5h5v5h-5zM8.5 6.5h5v5"],
  ["Close", "M6.5 6.5l6 6M12.5 6.5l-6 6"],
];

const TitleBar = () => (
  <div className="grid h-[37px] shrink-0 grid-cols-[1fr_auto_1fr] items-center border-b border-[#bdbdbd] bg-[#ebebeb]">
    <span />
    <h1 className="text-[15px] font-semibold text-[#3d3d3d]">dual_sided_board_eCVT — Schematic Editor</h1>
    <div className="flex justify-end gap-3 pr-[7px]">
      {WINDOW_BUTTONS.map(([name, d]) => (
        <button key={name} aria-label={name} className="h-[22px] w-[22px] rounded-full bg-[#dadada]">
          <svg width="22" height="22" viewBox="-1.5 -1.5 22 22" fill="none" stroke="#3d3d3d">
            <path d={d} />
          </svg>
        </button>
      ))}
    </div>
  </div>
);

const STATUS = ["Z 1.29", "X 700  Y 3750", "dx 700  dy 3750  dist 3815", "grid 50", "mils"];

export default function App() {
  return (
    <div className="flex h-screen flex-col overflow-hidden font-['Ubuntu','Noto_Sans',sans-serif] text-[#4a4a4a]">
      <TopBar />
      <div className="flex min-h-0 flex-1">
        <Dock />
        <main className="flex min-w-0 flex-1 flex-col bg-white">
          <TitleBar />
          <nav className="flex h-[26px] shrink-0 items-center gap-4 border-b border-[#e2e2e2] bg-[#fafafa] pl-2">
            {MENUS.map((m) => (
              <button key={m} className="text-[15px] leading-6">{m}</button>
            ))}
          </nav>
          <div role="toolbar" className="flex h-[38px] shrink-0 items-center bg-white pl-1">
            <Tools list={TOP_TOOLS} />
            <div className="relative ml-px flex items-center">
              <select
                aria-label="Variant"
                className="h-[34px] w-[112px] appearance-none rounded-md border border-[#cdcdcd] bg-white pl-[11px] text-[14px]"
              >
                <option>&lt; Default &gt;</option>
              </select>
              <svg className="pointer-events-none absolute right-3" width="11" height="7" viewBox="0 0 11 7" fill="none" stroke="#444" strokeWidth="1.5">
                <path d="M1 1l4.5 4.5L10 1" />
              </svg>
            </div>
            <div className="ml-[6px] h-[25px] w-px bg-[#b4b4b4]" />
          </div>

          <div className="flex min-h-0 flex-1">
            <LeftPanels />
            <div role="toolbar" className="flex w-[34px] shrink-0 flex-col items-center pt-1">
              <Tools list={LEFT_TOOLS} vertical />
            </div>
            <div className="min-w-0 flex-1 border border-[#a9aaa8] bg-[#f4f3ef]">
              <Schematic />
            </div>
            <div role="toolbar" className="flex w-[34px] shrink-0 flex-col items-center pt-1">
              <Tools list={RIGHT_TOOLS} vertical />
            </div>
          </div>

          <div className="h-9 shrink-0 bg-white" />
          <footer className="flex h-[23px] shrink-0 items-center bg-[#fafafa] pl-[234px] text-[14px]">
            {STATUS.map((s) => (
              <span key={s} className="w-[229px] whitespace-pre">{s}</span>
            ))}
            <span className="ml-auto bg-[#d41414] text-[10px] leading-[18px] font-bold whitespace-nowrap text-white">
              99+
            </span>
          </footer>
        </main>
      </div>
    </div>
  );
}
